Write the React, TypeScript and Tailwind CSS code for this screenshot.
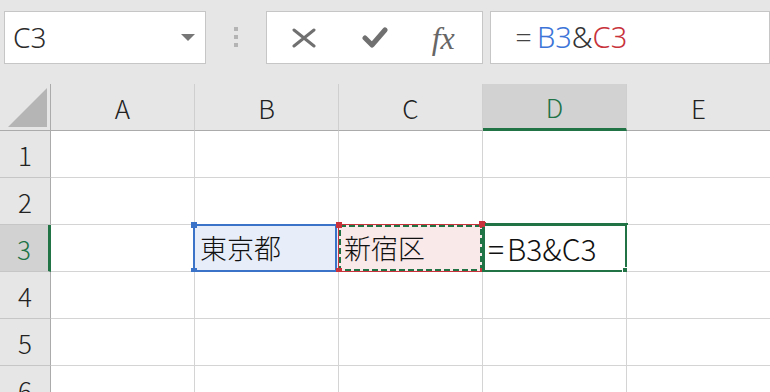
import React from "react";

const cols = ["A", "B", "C", "D", "E"];
const rows = [1, 2, 3, 4, 5, 6];
const jp = { fontFamily: '"Noto Sans CJK JP", "Noto Sans", sans-serif' };
const ui = { fontFamily: '"Noto Sans", "Open Sans", sans-serif' };

function ColHeader({ label }: { label: string }) {
  const active = label === "D";
  return (
    <div
      className={`flex items-center justify-center text-[26px] font-light border-r border-r-[#cfcfcf] ${
        active
          ? "bg-[#d2d2d2] text-[#217346] border-b-[3px] border-b-[#217346]"
          : "bg-[#e6e6e6] text-[#222] border-b border-b-[#ababab]"
      }`}
      style={jp}
    >
      {label}
    </div>
  );
}

function RowHeader({ n }: { n: number }) {
  const active = n === 3;
  return (
    <div
      className={`flex items-center justify-center text-[26px] font-light border-b border-b-[#c6c6c6] ${
        active
          ? "bg-[#d2d2d2] text-[#217346] border-r-[3px] border-r-[#217346]"
          : "bg-[#e6e6e6] text-[#222] border-r border-r-[#ababab]"
      }`}
      style={jp}
    >
      {n}
    </div>
  );
}

function Handle({ className }: { className: string }) {
  return <div className={`absolute w-[6px] h-[6px] ${className}`} />;
}

function Cell({ r, c }: { r: number; c: string }) {
  const base = "relative border-r border-b border-[#d4d4d4] flex items-center pl-[5px] text-[27px] font-light text-[#111]";
  if (r === 3 && c === "B") {
    return (
      <div className={`${base} bg-[#e8eef9]`} style={jp}>
        <div className="absolute left-[-2px] top-[-1px] w-[144px] h-[48px] border-2 border-[#3b73c9]" />
        <Handle className="left-[-4px] top-[-3px] bg-[#3b73c9]" />
        <Handle className="left-[-4px] bottom-[-3px] bg-[#3b73c9]" />
        <span className="relative">東京都</span>
      </div>
    );
  }
  if (r === 3 && c === "C") {
    return (
      <div className={`${base} bg-[#f9e9e9]`} style={jp}>
        <div className="absolute left-[-1px] top-[-1px] w-[145px] h-[48px] border border-[#c9343c]" />
        <svg className="absolute left-0 top-0" width="143" height="46">
          <rect x="1" y="1" width="141" height="44" fill="none" stroke="#217346" strokeWidth="2" strokeDasharray="6 3" />
        </svg>
        <Handle className="left-[-3px] top-[-3px] bg-[#c9343c]" />
        <Handle className="left-[-3px] bottom-[-3px] bg-[#c9343c]" />
        <Handle className="right-[-4px] top-[-3px] bg-[#c9343c]" />
        <Handle className="right-[-4px] bottom-[-3px] bg-[#c9343c]" />
        <span className="relative">新宿区</span>
      </div>
    );
  }
  if (r === 3 && c === "D") {
    return (
      <div className={`${base} bg-white`} style={jp}>
        <div className="absolute left-[-1px] top-[-2px] w-[146px] h-[50px] border-[3px] border-[#217346]" />
        <Handle className="left-[-4px] top-[-4px] bg-[#c9343c] w-[5px] h-[5px]" />
        <div className="absolute right-[-4px] bottom-[-4px] w-[8px] h-[8px] bg-[#217346] border border-white" />
        <span className="relative text-[30px]">
          <span className="mr-[3px]">=</span>B3&amp;C3
        </span>
      </div>
    );
  }
  return <div className={`${base} bg-white`} />;
}

export default function App() {
  return (
    <div className="w-[770px] h-[392px] overflow-hidden bg-[#e6e6e6] select-none">
      {/* formula bar */}
      <div className="h-[84px] flex items-start pt-[11px]">
        <div className="ml-[4px] w-[202px] h-[53px] bg-white border border-[#c6c6c6] flex items-center justify-between pl-[8px] pr-[10px]">
          <span className="text-[28px] font-light text-[#2b2b2b] -mt-[2px]" style={ui}>C3</span>
          <svg width="14" height="7" viewBox="0 0 14 7">
            <path d="M0 0 H14 L7 7 Z" fill="#777" />
          </svg>
        </div>
        <div className="w-[60px] flex flex-col items-center gap-[4px] pt-[16px]">
          <div className="w-[4px] h-[4px] bg-[#b4b4b4]" />
          <div className="w-[4px] h-[4px] bg-[#b4b4b4]" />
          <div className="w-[4px] h-[4px] bg-[#b4b4b4]" />
        </div>
        <div className="w-[218px] h-[53px] bg-white border border-[#c6c6c6] flex items-center pl-[25px]">
          <svg width="24" height="20" viewBox="0 0 24 20">
            <path d="M2 2 L22 18 M22 2 L2 18" stroke="#707070" strokeWidth="3" strokeLinecap="round" />
          </svg>
          <svg className="ml-[46px]" width="26" height="22" viewBox="0 0 26 22">
            <path d="M3 11 L10 18 L23 3" stroke="#707070" strokeWidth="5" fill="none" strokeLinecap="round" strokeLinejoin="round" />
          </svg>
          <span
            className="ml-[44px] text-[32px] italic text-[#666] leading-none"
            style={{ fontFamily: '"Liberation Serif", "DejaVu Serif", serif' }}
          >
            fx
          </span>
        </div>
        <div className="ml-[7px] w-[280px] h-[53px] bg-white border border-[#c6c6c6] flex items-center pl-[24px] text-[29px] font-light" style={ui}>
          <span className="text-[#444] -mt-[2px] mr-[5px]">=</span>
          <span className="text-[#3c74d8] -mt-[2px]">B3</span>
          <span className="text-[#333] -mt-[2px]">&amp;</span>
          <span className="text-[#c8323a] -mt-[2px]">C3</span>
        </div>
      </div>

      {/* grid */}
      <div className="grid grid-cols-[51px_144px_144px_144px_144px_144px] grid-rows-[47px_47px_47px_47px_47px_47px_47px] bg-white">
        <div className="relative bg-[#e6e6e6] border-r border-b border-[#ababab]">
          <svg className="absolute left-[8px] top-[4px]" width="40" height="40" viewBox="0 0 40 40">
            <path d="M39 0 V39 H0 Z" fill="#b5b5b5" />
          </svg>
        </div>
        {cols.map((c) => (
          <ColHeader key={c} label={c} />
        ))}
        {rows.map((r) => (
          <React.Fragment key={r}>
            <RowHeader n={r} />
            {cols.map((c) => (
              <Cell key={c} r={r} c={c} />
            ))}
          </React.Fragment>
        ))}
      </div>
    </div>
  );
}
